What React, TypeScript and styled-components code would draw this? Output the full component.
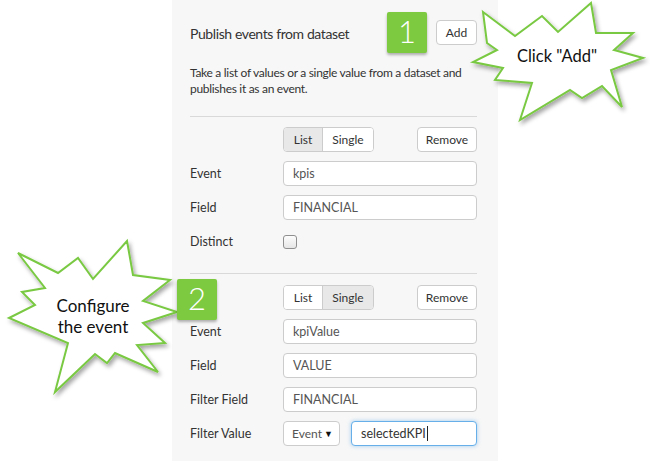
import React from 'react'
import styled, { createGlobalStyle, css } from 'styled-components'

const GlobalStyle = createGlobalStyle`
  html, body {
    margin: 0;
    padding: 0;
    background: #fff;
  }
  body {
    font-family: Lato, "Open Sans", sans-serif;
  }
`

const Page = styled.div`
  position: relative;
  width: 650px;
  height: 461px;
  overflow: hidden;
  background: #fff;
`

const Panel = styled.div`
  margin-left: 172px;
  width: 326px;
  height: 100%;
  box-sizing: border-box;
  padding: 12px 21px 0 18px;
  background: #f7f7f7;
  color: #333;
  font-size: 12.5px;
`

const Header = styled.div`
  display: flex;
  align-items: center;
  height: 41px;
`

const Title = styled.div`
  flex: 1;
  font-size: 14px;
  letter-spacing: -0.4px;
  padding-top: 2px;
`

const Badge = styled.div<{ $floating?: boolean }>`
  width: 40px;
  height: 41px;
  box-sizing: border-box;
  padding-bottom: 3px;
  background: #7dc93f;
  color: #fff;
  font-size: 31px;
  font-weight: 300;
  display: flex;
  align-items: center;
  justify-content: center;
  border-radius: 2px;
  box-shadow: 0 2px 3px rgba(0, 0, 0, 0.3);
  z-index: 2;
  ${(p) =>
    p.$floating &&
    css`
      position: absolute;
      left: -13px;
      top: -6px;
    `}
`

const Button = styled.div<{ $w: number }>`
  width: ${(p) => p.$w}px;
  height: 25px;
  box-sizing: border-box;
  border: 1px solid #ccc;
  border-radius: 4px;
  background: #fff;
  display: flex;
  align-items: center;
  justify-content: center;
  font-size: 12px;
  color: #333;
`

const AddButton = styled(Button)`
  margin-left: 9px;
`

const Description = styled.p`
  margin: 12px 0 0;
  line-height: 16px;
  font-size: 12px;
  letter-spacing: -0.3px;
  white-space: nowrap;
`

const Divider = styled.hr<{ $top: number }>`
  border: 0;
  height: 1px;
  background: #d9d9d9;
  margin: ${(p) => p.$top}px 0 0;
`

const Section = styled.div<{ $top: number }>`
  position: relative;
  margin-top: ${(p) => p.$top}px;
  display: grid;
  grid-template-columns: 93px 1fr;
  grid-auto-rows: 25px;
  row-gap: 9px;
  align-items: center;
`

const Label = styled.div`
  font-size: 12.5px;
`

const ToolRow = styled.div`
  display: flex;
  justify-content: space-between;
  align-items: center;
`

const Segmented = styled.div`
  display: inline-flex;
  height: 25px;
  box-sizing: border-box;
  border: 1px solid #ccc;
  border-radius: 4px;
  overflow: hidden;
  background: #fff;
`

const Segment = styled.div<{ $active?: boolean; $w: number }>`
  width: ${(p) => p.$w}px;
  display: flex;
  align-items: center;
  justify-content: center;
  font-size: 12px;
  background: ${(p) => (p.$active ? '#e8e8e8' : '#fff')};
  & + & {
    border-left: 1px solid #ccc;
  }
`

const Field = styled.div<{ $focused?: boolean }>`
  flex: 1;
  height: 25px;
  box-sizing: border-box;
  border: 1px solid ${(p) => (p.$focused ? '#66afe9' : '#ccc')};
  border-radius: 4px;
  background: #fff;
  padding: 0 9px;
  display: flex;
  align-items: center;
  font-size: 12.5px;
  color: #555;
  ${(p) =>
    p.$focused &&
    css`
      box-shadow: 0 0 4px rgba(102, 175, 233, 0.6);
      color: #333;
    `}
`

const Caret = styled.span`
  display: inline-block;
  width: 1px;
  height: 15px;
  background: #222;
  margin-left: 1px;
`

const Combo = styled.div`
  display: flex;
  gap: 11px;
`

const Select = styled.div`
  width: 57px;
  height: 25px;
  box-sizing: border-box;
  border: 1px solid #ccc;
  border-radius: 4px;
  background: #fff;
  padding: 0 6px 0 8px;
  display: flex;
  align-items: center;
  justify-content: space-between;
  font-size: 12px;
  color: #555;
`

const Arrow = styled.span`
  font-size: 9px;
  color: #111;
`

const Checkbox = styled.div`
  width: 12px;
  height: 12px;
  border: 1px solid #8f8f8f;
  border-radius: 3px;
  background: linear-gradient(#fdfdfd, #e6e6e6);
`

const Callout = styled.div<{ $x: number; $y: number; $w: number; $h: number }>`
  position: absolute;
  left: ${(p) => p.$x}px;
  top: ${(p) => p.$y}px;
  width: ${(p) => p.$w}px;
  height: ${(p) => p.$h}px;
  z-index: 1;
  svg {
    position: absolute;
    inset: 0;
    overflow: visible;
  }
`

const CalloutText = styled.div<{ $cx: number; $cy: number; $size: number }>`
  position: absolute;
  left: ${(p) => p.$cx}px;
  top: ${(p) => p.$cy}px;
  transform: translate(-50%, -50%);
  font-family: Lato, "Open Sans", sans-serif;
  font-size: ${(p) => p.$size}px;
  line-height: 21px;
  color: #111;
  text-align: center;
  white-space: nowrap;
`

const Burst = ({ points, w, h }: { points: string; w: number; h: number }) => (
  <svg width={w} height={h} viewBox={`0 0 ${w} ${h}`}>
    <defs>
      <filter id={`sh${w}`} x="-20%" y="-20%" width="140%" height="140%">
        <feDropShadow dx="2" dy="3" stdDeviation="2" floodColor="#000" floodOpacity="0.35" />
      </filter>
    </defs>
    <polygon
      points={points}
      fill="#fff"
      stroke="#7ac943"
      strokeWidth="2"
      strokeLinejoin="miter"
      filter={`url(#sh${w})`}
    />
  </svg>
)

const burstAdd =
  '13,12 45,36 72,16 88,32 121,3 126,33 163,33 144,50 173,58 141,70 152,107 132,86 112,98 100,90 50,120 62,83 25,80 33,68 3,62 27,50 17,43'

const burstConfigure =
  '18,23 58,43 78,28 93,49 127,11 133,45 170,50 143,71 177,82 143,93 165,113 137,115 158,142 115,123 107,133 95,124 55,162 68,113 9,88 35,75 22,62 45,58'

export default function App() {
  return (
    <Page>
      <GlobalStyle />
      <Panel>
        <Header>
          <Title>Publish events from dataset</Title>
          <Badge>1</Badge>
          <AddButton $w={41}>Add</AddButton>
        </Header>
        <Description>
          Take a list of values or a single value from a dataset and
          <br />
          publishes it as an event.
        </Description>

        <Divider $top={19} />
        <Section $top={10}>
          <span />
          <ToolRow>
            <Segmented>
              <Segment $w={38} $active>List</Segment>
              <Segment $w={50}>Single</Segment>
            </Segmented>
            <Button $w={60}>Remove</Button>
          </ToolRow>
          <Label>Event</Label>
          <Field>kpis</Field>
          <Label>Field</Label>
          <Field>FINANCIAL</Field>
          <Label>Distinct</Label>
          <div>
            <Checkbox />
          </div>
        </Section>

        <Divider $top={19} />
        <Section $top={11}>
          <Badge $floating>2</Badge>
          <span />
          <ToolRow>
            <Segmented>
              <Segment $w={38}>List</Segment>
              <Segment $w={50} $active>Single</Segment>
            </Segmented>
            <Button $w={60}>Remove</Button>
          </ToolRow>
          <Label>Event</Label>
          <Field>kpiValue</Field>
          <Label>Field</Label>
          <Field>VALUE</Field>
          <Label>Filter Field</Label>
          <Field>FINANCIAL</Field>
          <Label>Filter Value</Label>
          <Combo>
            <Select>
              <span>Event</span>
              <Arrow>▼</Arrow>
            </Select>
            <Field $focused>
              selectedKPI
              <Caret />
            </Field>
          </Combo>
        </Section>
      </Panel>

      <Callout $x={470} $y={0} $w={180} $h={130}>
        <Burst points={burstAdd} w={180} h={130} />
        <CalloutText $cx={87} $cy={56} $size={16.5}>Click "Add"</CalloutText>
      </Callout>

      <Callout $x={0} $y={230} $w={200} $h={170}>
        <Burst points={burstConfigure} w={200} h={170} />
        <CalloutText $cx={93} $cy={86} $size={17}>
          Configure
          <br />
          the event
        </CalloutText>
      </Callout>
    </Page>
  )
}
